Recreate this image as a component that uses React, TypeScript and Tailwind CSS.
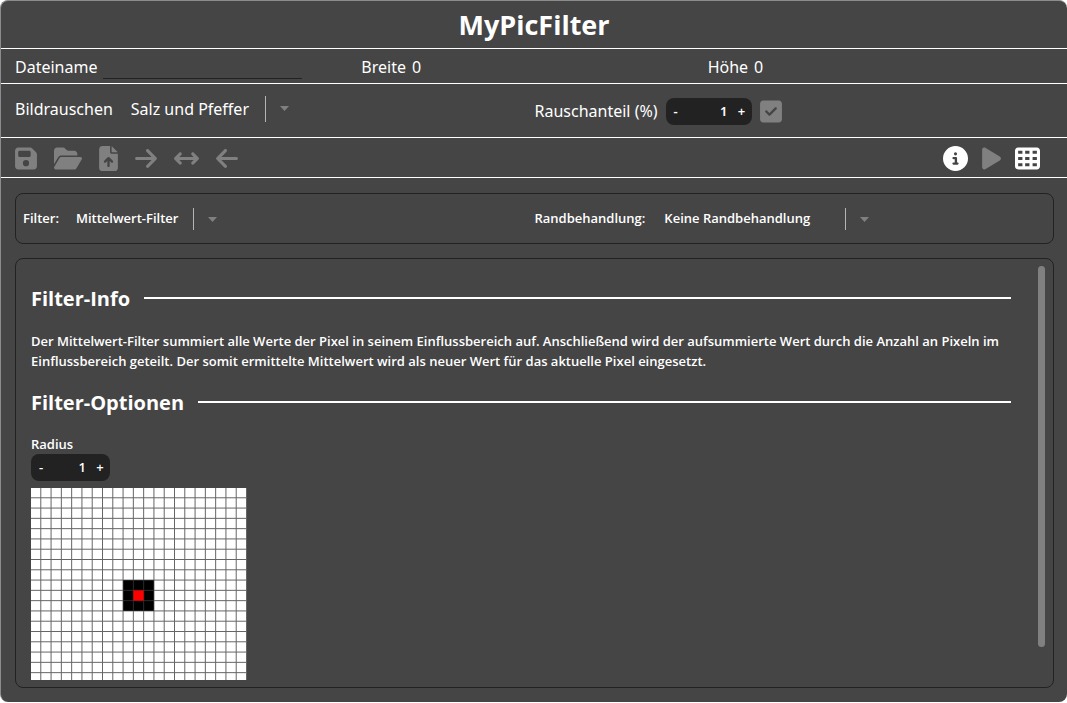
import { useState, type ReactNode } from "react";
import {
  FaArrowLeft,
  FaArrowRight,
  FaArrowsLeftRight,
  FaCircleInfo,
  FaFileArrowUp,
  FaFloppyDisk,
  FaFolderOpen,
  FaPlay,
  FaSquareCheck,
  FaTableCells,
} from "react-icons/fa6";

const GRID_CELLS = 21;
const GRID_SIZE = 216;

type ChoiceProps = {
  id: string;
  options: string[];
  selectClass: string;
  dividerClass: string;
};

function Choice({ id, options, selectClass, dividerClass }: ChoiceProps) {
  return (
    <div className="flex items-center">
      <select id={id} className={`appearance-none bg-transparent outline-none ${selectClass}`}>
        {options.map((option) => (
          <option key={option} className="bg-[#454545]">
            {option}
          </option>
        ))}
      </select>
      <span className={`w-px bg-[#b4b4b4] ${dividerClass}`} />
      <svg viewBox="0 0 9 5" className="ml-3.5 h-[5px] w-[9px] fill-[#808080]" aria-hidden="true">
        <path d="M0 0h9L4.5 5z" />
      </svg>
    </div>
  );
}

type StepperProps = {
  id: string;
  value: number;
  onChange: (value: number) => void;
  inputClass: string;
};

function Stepper({ id, value, onChange, inputClass }: StepperProps) {
  return (
    <div className="flex h-[27px] w-fit items-center rounded-lg bg-[#222] pt-px text-[13px] font-semibold">
      <button type="button" aria-label="Verringern" className="w-5" onClick={() => onChange(Math.max(1, value - 1))}>
        -
      </button>
      <input
        id={id}
        inputMode="numeric"
        value={value}
        onChange={(event) => onChange(Number(event.target.value) || 1)}
        className={`bg-transparent text-right outline-none ${inputClass}`}
      />
      <button type="button" aria-label="Erhöhen" className="ml-1 w-5" onClick={() => onChange(value + 1)}>
        +
      </button>
    </div>
  );
}

function SectionTitle({ children }: { children: ReactNode }) {
  return (
    <div className="flex items-center gap-3.5">
      <h2 className="pt-0.5 text-[20px] leading-[26px] font-bold">{children}</h2>
      <span className="h-0.5 flex-1 bg-white" />
    </div>
  );
}

function RadiusGrid({ radius }: { radius: number }) {
  const pitch = GRID_SIZE / GRID_CELLS;
  const center = (GRID_CELLS - 1) / 2;
  const lines = Array.from({ length: GRID_CELLS }, (_, index) => (index + 1) * pitch - 0.5);
  return (
    <svg viewBox="0 0 216 216" className="mt-[7px] block h-[216px] w-[216px] shrink-0" role="img" aria-label="Einflussbereich">
      <rect width="216" height="216" fill="#fff" />
      {lines.map((at) => (
        <path key={at} d={`M${at} 0V216M0 ${at}H216`} stroke="#666" strokeWidth="1" />
      ))}
      <rect
        x={(center - radius) * pitch - 0.5}
        y={(center - radius) * pitch - 0.5}
        width={(2 * radius + 1) * pitch}
        height={(2 * radius + 1) * pitch}
        fill="#2b2b2b"
      />
      {Array.from({ length: (2 * radius + 1) ** 2 }, (_, index) => {
        const column = center - radius + (index % (2 * radius + 1));
        const row = center - radius + Math.floor(index / (2 * radius + 1));
        return (
          <rect
            key={index}
            x={column * pitch}
            y={row * pitch}
            width={pitch - 1}
            height={pitch - 1}
            fill="#000"
          />
        );
      })}
      <rect x={center * pitch - 0.5} y={center * pitch - 0.5} width={pitch} height={pitch} fill="#f00" />
    </svg>
  );
}

export default function App() {
  const [noise, setNoise] = useState(1);
  const [radius, setRadius] = useState(1);

  return (
    <div className="h-screen bg-white pb-px font-['Open_Sans','Noto_Sans',sans-serif] text-white">
      <div className="flex h-full flex-col rounded-lg border-t border-l border-[#8c8c8c] bg-[#454545]">
        <header className="flex h-12 shrink-0 items-center justify-center border-b border-white">
          <h1 className="text-[27px] leading-10 font-bold">MyPicFilter</h1>
        </header>

        <div className="grid h-[35px] shrink-0 grid-cols-3 items-center border-b border-white pt-0.5 pr-[13px] pl-3.5 font-['Noto_Sans','Open_Sans',sans-serif] text-base">
          <div className="flex items-center gap-1.5">
            <label htmlFor="filename">Dateiname</label>
            <input id="filename" className="h-6 w-[199px] border-b border-[#222] bg-transparent outline-none" />
          </div>
          <div className="flex gap-1.5">
            <span>Breite</span>
            <span>0</span>
          </div>
          <div className="flex gap-1.5">
            <span>Höhe</span>
            <span>0</span>
          </div>
        </div>

        <div className="grid h-[54px] shrink-0 grid-cols-2 items-center border-b border-white pr-[13px] pl-3.5 font-['Noto_Sans','Open_Sans',sans-serif] text-base">
          <div className="flex items-center gap-[18px] pb-1">
            <label htmlFor="noise">Bildrauschen</label>
            <Choice id="noise" options={["Salz und Pfeffer"]} selectClass="w-[134px]" dividerClass="h-[26px]" />
          </div>
          <div className="flex items-center gap-2 pt-px">
            <label htmlFor="share">Rauschanteil (%)</label>
            <Stepper id="share" value={noise} onChange={setNoise} inputClass="w-[42px]" />
            <button type="button" aria-label="Anwenden" className="text-[#808080]">
              <FaSquareCheck className="h-[25px] w-[22px]" />
            </button>
          </div>
        </div>

        <div className="flex h-10 shrink-0 items-center justify-between border-b border-white pt-px pr-[27px] pl-3.5">
          <div className="flex items-center gap-[17px] text-[#808080]">
            <button type="button" aria-label="Speichern">
              <FaFloppyDisk className="h-[25px] w-[22px]" />
            </button>
            <button type="button" aria-label="Öffnen">
              <FaFolderOpen className="h-[25px] w-[28px]" />
            </button>
            <button type="button" aria-label="Hochladen">
              <FaFileArrowUp className="h-[25px] w-[19px]" />
            </button>
            <button type="button" aria-label="Vorwärts">
              <FaArrowRight className="h-[25px] w-[22px]" />
            </button>
            <button type="button" aria-label="Vergleichen">
              <FaArrowsLeftRight className="h-[25px] w-[25px]" />
            </button>
            <button type="button" aria-label="Zurück">
              <FaArrowLeft className="h-[25px] w-[22px]" />
            </button>
          </div>
          <div className="flex items-center gap-3.5">
            <button type="button" aria-label="Information">
              <FaCircleInfo className="h-[25px] w-[25px]" />
            </button>
            <button type="button" aria-label="Starten" className="text-[#808080]">
              <FaPlay className="h-[25px] w-[19px]" />
            </button>
            <button type="button" aria-label="Raster">
              <FaTableCells className="h-[25px] w-[25px]" />
            </button>
          </div>
        </div>

        <main className="flex min-h-0 flex-1 flex-col gap-3.5 pt-[15px] pr-[13px] pb-3.5 pl-3.5 text-[13px] font-semibold">
          <section className="grid h-[51px] shrink-0 grid-cols-2 items-center rounded-lg border border-[#222] px-[7px] pt-px">
            <div className="flex items-center gap-[17px]">
              <label htmlFor="filter">Filter:</label>
              <Choice id="filter" options={["Mittelwert-Filter"]} selectClass="w-[117px]" dividerClass="h-[22px]" />
            </div>
            <div className="flex items-center gap-[19px]">
              <label htmlFor="border">Randbehandlung:</label>
              <Choice id="border" options={["Keine Randbehandlung"]} selectClass="w-[181px]" dividerClass="h-[22px]" />
            </div>
          </section>

          <section className="flex min-h-0 flex-1 justify-between rounded-lg border border-[#222] py-[7px] pr-2 pl-[15px]">
            <div className="min-w-0 flex-1 overflow-hidden pt-[18px] pr-[27px]">
              <SectionTitle>Filter-Info</SectionTitle>
              <p className="mt-[19px] mb-[17px] leading-5">
                Der Mittelwert-Filter summiert alle Werte der Pixel in seinem Einflussbereich auf. Anschließend wird der
                aufsummierte Wert durch die Anzahl an Pixeln im Einflussbereich geteilt. Der somit ermittelte Mittelwert
                wird als neuer Wert für das aktuelle Pixel eingesetzt.
              </p>
              <SectionTitle>Filter-Optionen</SectionTitle>
              <label htmlFor="radius" className="mt-[19px] block leading-[19px]">
                Radius
              </label>
              <Stepper id="radius" value={radius} onChange={setRadius} inputClass="w-[35px]" />
              <RadiusGrid radius={radius} />
            </div>
            <span className="h-[92%] w-[7px] rounded-full bg-[#808080]" />
          </section>
        </main>
      </div>
    </div>
  );
}
